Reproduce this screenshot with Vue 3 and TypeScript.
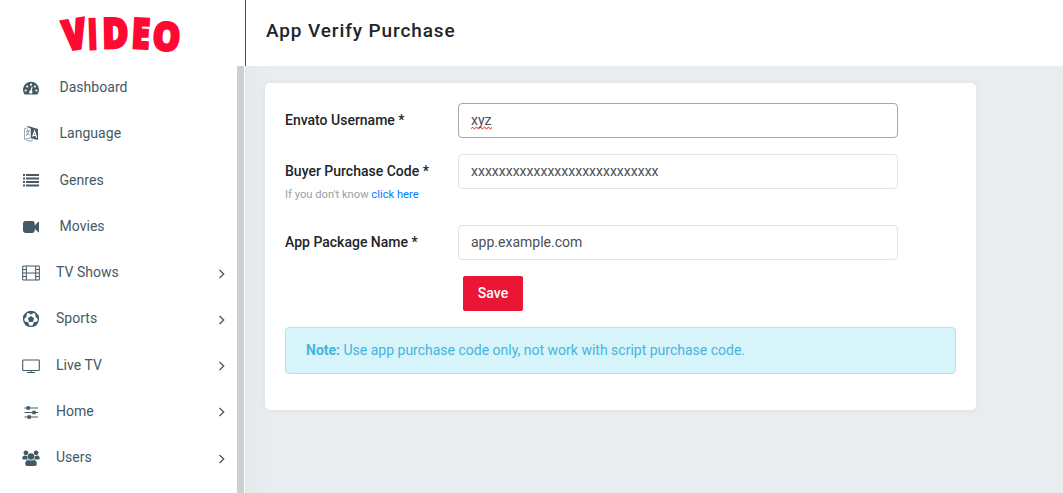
<script setup lang="ts">
interface MenuItem {
  label: string
  icon: string
  expandable: boolean
}

const menu: MenuItem[] = [
  { label: 'Dashboard', icon: 'gauge', expandable: false },
  { label: 'Language', icon: 'language', expandable: false },
  { label: 'Genres', icon: 'list', expandable: false },
  { label: 'Movies', icon: 'camera', expandable: false },
  { label: 'TV Shows', icon: 'film', expandable: true },
  { label: 'Sports', icon: 'ball', expandable: true },
  { label: 'Live TV', icon: 'tv', expandable: true },
  { label: 'Home', icon: 'sliders', expandable: true },
  { label: 'Users', icon: 'users', expandable: true },
]

const username = 'xyz'
const purchaseCode = 'xxxxxxxxxxxxxxxxxxxxxxxxxxx'
const packageName = 'app.example.com'
</script>

<template>
  <div class="layout">
    <aside class="sidebar">
      <div class="brand">
        <svg class="logo" width="237" height="64" viewBox="0 0 237 64" role="img" aria-label="VIDEO">
          <g class="logo-text">
            <text transform="translate(65.3 51) rotate(-9) scale(.81 1)">V</text>
            <text transform="translate(88.2 49.2) rotate(-2) scale(.66 1)">I</text>
            <text transform="translate(102.5 48.3) rotate(-1) scale(.85 1)">D</text>
            <text transform="translate(131 48) rotate(3) scale(.79 1)">E</text>
            <text transform="translate(151.8 49.5) rotate(4) scale(.83 .93)">O</text>
          </g>
        </svg>
      </div>
      <nav class="menu">
        <a v-for="item in menu" :key="item.label" class="item" :class="{ expandable: item.expandable }">
          <svg class="icon" width="20" height="20" viewBox="0 0 20 20">
            <g v-if="item.icon === 'gauge'">
              <path fill="currentColor" d="M3.6 16.5A8 8 0 1 1 16.4 16.5z" />
              <g fill="#fff">
                <circle cx="4.7" cy="12.5" r="1.1" /><circle cx="6.2" cy="8.5" r="1.1" />
                <circle cx="10" cy="6.7" r="1.1" /><circle cx="13.9" cy="8.5" r="1.1" />
                <circle cx="15.4" cy="12.5" r="1.1" /><circle cx="9.8" cy="14" r="1.7" />
              </g>
              <path d="M10 13.5L11.1 8.8" stroke="#fff" stroke-width="1.1" />
            </g>
            <g v-else-if="item.icon === 'language'">
              <path d="M3.5 4.6L10 2.9v11L3.5 15.3z" fill="#fff" stroke="currentColor" stroke-width=".5" />
              <path d="M5 1.6l12 3.4v11l-7-1.8V4.7z" fill="currentColor" />
              <path d="M11.6 12.6l2-5.5 2 6.5M12.3 11.1l2.8.6" fill="none" stroke="#fff" stroke-width="1.2" />
              <path d="M4.8 7.4l3.8-.8M6.6 5.4v1.5M8 7q-.8 3.3-3.2 5M5.3 8.9q1.5 1.5 3.2 2M5.5 16q3.5 2.5 6.5 0" fill="none" stroke="currentColor" stroke-width=".6" />
            </g>
            <path v-else-if="item.icon === 'list'" fill="currentColor" d="M2 3h2v2H2zM5 3h13v2H5zM2 6.5h2v2H2zM5 6.5h13v2H5zM2 10h2v2H2zM5 10h13v2H5zM2 13.5h2v2H2zM5 13.5h13v2H5z" />
            <path v-else-if="item.icon === 'camera'" fill="currentColor" d="M4.5 4h6.8q2.4 0 2.4 2.4v2l3.4-3.3q.9-.8.9.4v9.2q0 1.2-.9.4l-3.4-3.3v1.8q0 2.4-2.4 2.4H4.5Q2 16 2 13.6V6.4Q2 4 4.5 4z" />
            <path v-else-if="item.icon === 'film'" fill="none" stroke="currentColor" stroke-width="1" d="M1.7 3h16.6v14H1.7zM5.3 3v14M14.7 3v14M5.3 10h9.4M1.7 6.5h3.6M1.7 10h3.6M1.7 13.5h3.6M14.7 6.5h3.6M14.7 10h3.6M14.7 13.5h3.6" />
            <g v-else-if="item.icon === 'ball'">
              <circle cx="10" cy="10" r="7.4" fill="#fff" stroke="currentColor" stroke-width="1.3" />
              <path fill="currentColor" d="M10 7l3.1 2.3-1.2 3.6H8.1L6.9 9.3zM5.6 3.1L10 5.6l4.4-2.5L10 1.8zM1.9 10.5l3.5-2.6.4-4.7-3.3 3zM18.1 10.5l-3.5-2.6-.4-4.7 3.3 3zM2.7 12.5l4.4.6 1.7 4.8-4-1.5zM17.3 12.5l-4.4.6-1.7 4.8 4-1.5z" />
            </g>
            <path v-else-if="item.icon === 'tv'" fill="none" stroke="currentColor" stroke-width="1.1" d="M2.4 4h15.2q.7 0 .7.7v9.1q0 .7-.7.7H2.4q-.7 0-.7-.7V4.7q0-.7.7-.7zM10 14.5v2M6 16.5h8" />
            <g v-else-if="item.icon === 'sliders'">
              <path stroke="currentColor" stroke-width="1.2" d="M3.5 6h13.5M3.5 10.5h13.5M3.5 15h13.5" />
              <path fill="currentColor" d="M5.5 4.3h3.4v3.4H5.5zM11.3 8.8h3.4v3.4h-3.4zM6.5 13.3h3.4v3.4H6.5z" />
            </g>
            <g v-else fill="currentColor">
              <circle cx="4.9" cy="4.8" r="2.4" /><circle cx="15.1" cy="4.8" r="2.4" />
              <path d="M1.3 10.8q0-3.2 2.7-3.2l2.5.7q-.8 2.2.6 3.3H2.2q-.9 0-.9-.8zM18.7 10.8q0-3.2-2.7-3.2l-2.5.7q.8 2.2-.6 3.3h4.9q.9 0 .9-.8z" />
              <circle cx="10" cy="8.5" r="3.3" />
              <path d="M4.2 16.1q0-4.2 3.4-4.2 2.4 1.3 4.8 0 3.4 0 3.4 4.2 0 2-2 2H6.2q-2 0-2-2z" />
            </g>
          </svg>
          <span class="label">{{ item.label }}</span>
          <svg v-if="item.expandable" class="chevron" width="8" height="10" viewBox="0 0 8 10">
            <path d="M1.5 1l4.2 4-4.2 4" fill="none" stroke="currentColor" stroke-width="1.3" />
          </svg>
        </a>
      </nav>
    </aside>
    <div class="scrollbar"></div>
    <section class="content">
      <header class="topbar"><h1>App Verify Purchase</h1></header>
      <main class="page">
        <form class="card" @submit.prevent>
          <div class="row">
            <label for="username">Envato Username *</label>
            <div class="control">
              <input id="username" class="focused" type="text" :value="username" spellcheck="false" />
              <svg class="squiggle" width="21" height="4" viewBox="0 0 21 4">
                <path d="M0 2.8l1.5-1.6 2 1.6 2-1.6 2 1.6 2-1.6 2 1.6 2-1.6 2 1.6 2-1.6 2 1.6 1.5-1.2" fill="none" stroke="#f00" stroke-width="1" />
              </svg>
            </div>
          </div>
          <div class="row code">
            <label for="code">Buyer Purchase Code *<small>If you don't know <a>click here</a></small></label>
            <div class="control"><input id="code" type="text" :value="purchaseCode" spellcheck="false" /></div>
          </div>
          <div class="row">
            <label for="package">App Package Name *</label>
            <div class="control"><input id="package" type="text" :value="packageName" spellcheck="false" /></div>
          </div>
          <button type="submit">Save</button>
          <div class="note"><b>Note:</b> Use app purchase code only, not work with script purchase code.</div>
        </form>
      </main>
    </section>
  </div>
</template>

<style>
body {
  overflow: hidden;
}
</style>

<style scoped>
.layout {
  display: flex;
  height: 493px;
  background: #fff;
  font-family: Roboto, sans-serif;
  font-size: 14px;
  color: #4c5667;
}
.layout * {
  box-sizing: border-box;
}
.sidebar {
  width: 237px;
  flex: none;
}
.brand {
  height: 64px;
}
.logo {
  display: block;
}
.logo-text {
  font: 900 42px 'Open Sans', sans-serif;
  fill: #ff0832;
  stroke: #ff0832;
  stroke-width: 2.4px;
}
.item {
  display: flex;
  align-items: center;
  height: 46.25px;
  padding: 0 11px 0 21px;
  color: #435966;
}
.icon {
  position: relative;
  top: 1px;
  flex: none;
  margin-right: 18.5px;
}
.expandable .icon {
  margin-right: 15px;
}
.label {
  flex: 1;
  font-size: 14px;
  letter-spacing: 0.03px;
}
.chevron {
  position: relative;
  top: 1.5px;
}
.scrollbar {
  flex: none;
  width: 7px;
  margin: 66px 1px 0 0;
  background: #cbd1d3;
}
.content {
  flex: 1;
  display: flex;
  flex-direction: column;
}
.topbar {
  height: 66px;
  padding: 18px 0 0 20px;
  border-left: 1px solid #cf1537;
}
h1 {
  margin: 0;
  font: 500 19px/25px Roboto, sans-serif;
  letter-spacing: 0.88px;
  color: #212529;
}
.page {
  flex: 1;
  padding: 17px 0 0 20px;
  background: linear-gradient(90deg, #e5e9ec, #eaedf0 24px);
}
.card {
  width: 711px;
  height: 327px;
  padding: 20px;
  border-radius: 5px;
  background: #fff;
  box-shadow: 0 1px 6px rgba(60, 75, 85, 0.08);
}
.row {
  display: flex;
  height: 35px;
  margin-bottom: 16px;
}
.row.code {
  height: 55px;
}
label {
  width: 173px;
  padding-top: 7px;
  font-weight: 500;
  line-height: 21px;
  color: #212529;
}
small {
  display: block;
  margin-top: 4px;
  font-size: 11.2px;
  font-weight: 400;
  line-height: 18px;
  color: #98a0a7;
}
small a {
  color: #007bff;
}
.control {
  position: relative;
  width: 440px;
}
input {
  display: block;
  width: 100%;
  height: 35px;
  padding: 0 12px 2px;
  border: 1px solid #e1e3e4;
  border-radius: 4px;
  outline: 0;
  background: #fff;
  font: 400 14px Roboto, sans-serif;
  color: #495057;
}
input.focused {
  border-color: #a5a7a9;
}
.squiggle {
  position: absolute;
  left: 13px;
  top: 23px;
}
button {
  display: block;
  width: 60px;
  height: 35px;
  margin: 0 0 16px 178px;
  padding: 0 0 2px;
  border: 0;
  border-radius: 2px;
  background: #eb1536;
  font: 500 14px Roboto, sans-serif;
  color: #fff;
}
.note {
  height: 47px;
  padding: 0 20px;
  border: 1px solid #a9e9f2;
  border-radius: 4px;
  background: #d6f4fa;
  line-height: 45px;
  color: #45b5dd;
}
.note b {
  font-weight: 700;
}
</style>
